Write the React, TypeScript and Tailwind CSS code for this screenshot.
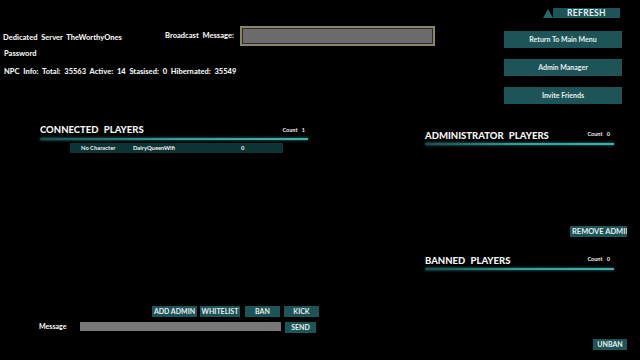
import React from "react";

const Btn = ({ children, className = "" }: { children: React.ReactNode; className?: string }) => (
  <div
    className={
      "flex items-center justify-center bg-[#1d5458] text-[#e8eeee] font-bold whitespace-nowrap " + className
    }
  >
    {children}
  </div>
);

const Line = ({ className = "" }: { className?: string }) => (
  <div
    className={
      "h-[2px] rounded-l-full bg-gradient-to-r from-[#1c4e4c] via-[#3c9e98] to-[#45b0a9] shadow-[0_0_3px_#2f8f8a] " +
      className
    }
  />
);

export default function App() {
  return (
    <div
      className="w-[640px] h-[360px] bg-black text-[#f0f0f0] overflow-hidden flex flex-col"
      style={{ fontFamily: "Lato, 'Liberation Sans', sans-serif" }}
    >
      {/* top */}
      <div className="flex h-[112px]">
        <div className="flex-1 flex flex-col text-[7.5px] font-black [word-spacing:2px]">
          <div className="flex items-center mt-[26px] h-[20px]">
            <div className="w-[165px] pl-[3px] pt-[3px]">Dedicated Server TheWorthyOnes</div>
            <div className="w-[75px]">Broadcast Message:</div>
            <div className="w-[195px] h-[20px] border-2 border-[#8a8562] bg-[#6c6c6c] shadow-[inset_0_0_0_1px_#2e2e26]" />
          </div>
          <div className="pl-[4px] mt-[2px] h-[12px] flex items-center">Password</div>
          <div className="pl-[4px] mt-[6px] h-[12px] flex items-center">
            NPC Info: Total: 35563 Active: 14 Stasised: 0 Hibernated: 35549
          </div>
        </div>
        <div className="w-[136px] flex flex-col pt-[8px] pr-[18px]">
          <div className="flex justify-end pr-[2px] h-[10px]">
            <div className="w-[10px] h-[10px] flex items-end">
              <div className="w-0 h-0 border-l-[5px] border-r-[5px] border-b-[9px] border-l-transparent border-r-transparent border-b-[#2c6367]" />
            </div>
            <Btn className="w-[67px] h-[10px] text-[8.5px] tracking-[0.3px]">REFRESH</Btn>
          </div>
          <Btn className="mt-[13px] h-[17px] text-[7px]">Return To Main Menu</Btn>
          <Btn className="mt-[11px] h-[17px] text-[7px]">Admin Manager</Btn>
          <Btn className="mt-[11px] h-[17px] text-[7px]">Invite Friends</Btn>
        </div>
      </div>

      {/* bottom */}
      <div className="flex flex-1">
        {/* left */}
        <div className="w-[330px] flex flex-col">
          <div className="ml-[40px] w-[268px] mt-[12px] h-[12px] flex items-center justify-between">
            <div className="text-[9.5px] font-black text-[#f4f4f4] [word-spacing:3px]">CONNECTED PLAYERS</div>
            <div className="text-[5.5px] font-bold pr-[3px] [word-spacing:3px]">Count 1</div>
          </div>
          <Line className="ml-[40px] w-[268px] mt-[2px]" />
          <div className="ml-[70px] w-[213px] h-[10px] mt-[3px] bg-[#0d3335] flex items-center text-[5.8px] font-bold">
            <div className="w-[63px] pl-[11px]">No Character</div>
            <div className="w-[108px]">DairyQueenWifi</div>
            <div>0</div>
          </div>
          <div className="flex-1" />
          <div className="flex pl-[152px] gap-[3px] h-[11px] text-[7px]">
            <Btn className="w-[45px]">ADD ADMIN</Btn>
            <Btn className="w-[40px]">WHITELIST</Btn>
            <Btn className="w-[35px] ml-[2px]">BAN</Btn>
            <Btn className="w-[35px] ml-[1px]">KICK</Btn>
          </div>
          <div className="flex items-start mt-[5px] h-[11px] mb-[27px]">
            <div className="w-[80px] pl-[39px] text-[7px] font-black leading-[9px]">Message</div>
            <div className="w-[201px] h-[9px] bg-[#777777]" />
            <Btn className="ml-[4px] w-[31px] h-[11px] text-[7px]">SEND</Btn>
          </div>
        </div>
        <div className="w-[95px]" />
        {/* right */}
        <div className="w-[202px] flex flex-col">
          <div className="mt-[19px] h-[11px] flex items-center justify-between w-[189px]">
            <div className="text-[9.5px] font-black text-[#f4f4f4] [word-spacing:3px]">ADMINISTRATOR PLAYERS</div>
            <div className="text-[5.5px] font-bold pr-[4px] -mt-[5px] [word-spacing:3px]">Count 0</div>
          </div>
          <Line className="w-[189px] mt-[1px]" />
          <div className="flex justify-end mt-[81px]">
            <div className="w-[57px] h-[11px] bg-[#1d5458] overflow-hidden flex items-center">
              <span className="pl-[2px] text-[7.5px] font-bold whitespace-nowrap text-[#e8eeee]">REMOVE ADMIN</span>
            </div>
          </div>
          <div className="mt-[19px] h-[11px] flex items-center justify-between w-[189px]">
            <div className="text-[9.5px] font-black text-[#f4f4f4] [word-spacing:3px]">BANNED PLAYERS</div>
            <div className="text-[5.5px] font-bold pr-[4px] -mt-[4px] [word-spacing:3px]">Count 0</div>
          </div>
          <Line className="w-[189px] mt-[1px]" />
          <div className="flex-1" />
          <div className="flex justify-end mb-[10px]">
            <Btn className="w-[34px] h-[11px] text-[7px]">UNBAN</Btn>
          </div>
        </div>
      </div>
    </div>
  );
}
